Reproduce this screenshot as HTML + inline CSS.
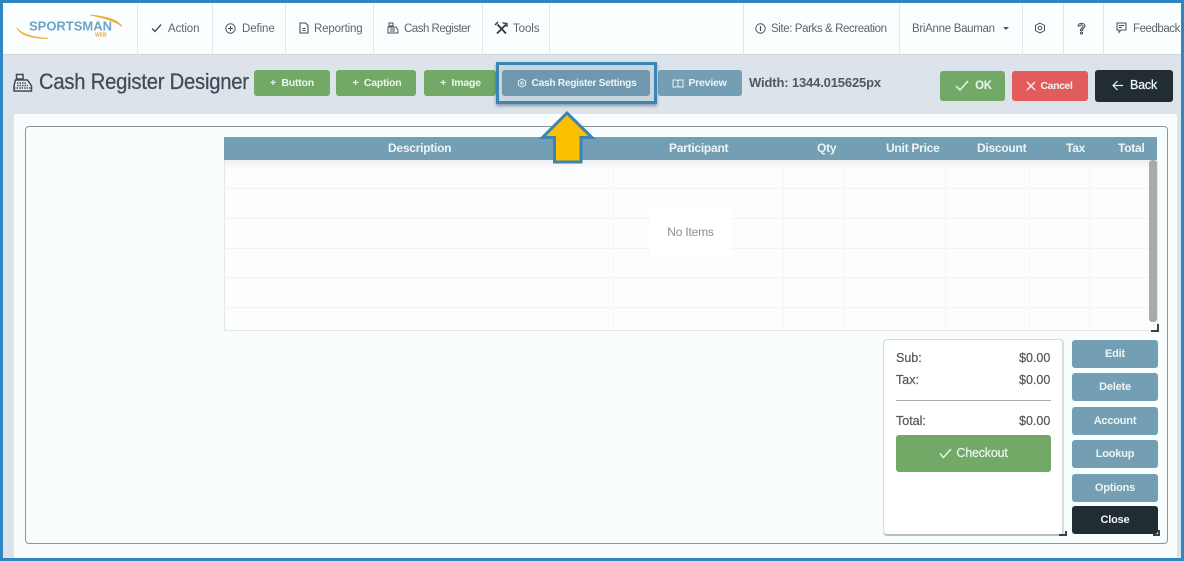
<!DOCTYPE html>
<html><head><meta charset="utf-8">
<style>
html,body{margin:0;padding:0}
body{width:1184px;height:561px;position:relative;overflow:hidden;background:#dce3ea;font-family:"Liberation Sans",sans-serif;color:#4d5a62}
div,span.a{position:absolute;box-sizing:border-box}
svg{position:absolute;overflow:visible}
.sep{top:3px;width:1px;height:52px;background:#e3e8ea}
.nav{top:22px;font-size:11.5px;line-height:15px;color:#5a666d;white-space:nowrap;letter-spacing:-.1px}
.btn{border-radius:3px;color:#eef6f4;font-weight:bold;font-size:10.5px;text-align:center;white-space:nowrap;letter-spacing:-.2px}
.g{background:#72a966}.b{background:#749eb3}.d{background:#212c33}.r{background:#e25c5c}
.th{top:137px;height:23px;line-height:22px;color:#edf5f6;font-weight:bold;font-size:12px;white-space:nowrap;letter-spacing:-.25px}
.hl{left:225px;width:924px;height:1px;background:#f2f3f3}
.vl{top:160px;height:170px;width:1px;background:#f6f6f6}
.side{left:1072px;width:86px;height:28px;line-height:28px;font-size:11px}
.lab{font-size:12.5px;line-height:16px;color:#4f575d;white-space:nowrap;-webkit-text-stroke:.2px #4f575d}
</style></head><body>
<!-- nav -->
<div style="left:3px;top:3px;width:1178px;height:52px;background:#fbfefe;border-bottom:1px solid #cfd6da"></div>
<svg style="left:15px;top:12px" width="112" height="30" viewBox="0 0 112 30"><path d="M2 16C6 22 18 25.5 33 26.5C20 26.5 6 24 2 16Z" fill="#e8b544" stroke="#e8b544" stroke-width="1"/><path d="M75 3C90 4 103 8 107 14.5C101 9.5 90 6 75 3Z" fill="#e6ae3a" stroke="#e6ae3a" stroke-width=".8"/><text x="14" y="18.5" font-family="Liberation Sans" font-size="12.5" font-weight="bold" fill="#6ba4c9" textLength="83" lengthAdjust="spacingAndGlyphs">SPORTSMAN</text><text x="80" y="24.5" font-family="Liberation Sans" font-size="5" font-weight="bold" fill="#d9ab44">WEB</text></svg>
<div class="sep" style="left:137px"></div><div class="sep" style="left:212px"></div><div class="sep" style="left:285px"></div><div class="sep" style="left:373px"></div><div class="sep" style="left:482px"></div><div class="sep" style="left:549px"></div><div class="sep" style="left:743px"></div><div class="sep" style="left:899px"></div><div class="sep" style="left:1022px"></div><div class="sep" style="left:1063px"></div><div class="sep" style="left:1103px"></div>
<svg style="left:151px;top:23px" width="11" height="10" fill="none" stroke="#444f55" stroke-width="1.4"><path d="M1 5.5L4 8.5L10 1.5"/></svg>
<div class="nav" style="left:168px">Action</div>
<svg style="left:225px;top:23px" width="11" height="11" fill="none" stroke="#444f55" stroke-width="1"><circle cx="5.5" cy="5.5" r="4.7"/><path d="M5.5 3V8M3 5.5H8"/></svg>
<div class="nav" style="left:242px">Define</div>
<svg style="left:299px;top:22px" width="10" height="12" fill="none" stroke="#444f55" stroke-width="1.1"><path d="M1 1H6.5L9 3.5V11H1Z"/><path d="M3.5 8.5H6.5M3.5 6.5H6.5"/></svg>
<div class="nav" style="left:314px;letter-spacing:-.15px">Reporting</div>
<svg style="left:387px;top:22px" width="12" height="12" fill="none" stroke="#444f55" stroke-width="1"><path d="M2 1H6V4H2ZM1 5H9L11 8V11H1Z"/><path d="M3 7H8M3 9H8"/></svg>
<div class="nav" style="left:404px;letter-spacing:-.5px">Cash Register</div>
<svg style="left:495px;top:22px" width="13" height="13" fill="none" stroke="#333c42" stroke-width="1.9"><path d="M2.5 2.5L11 11.5M11 2.5L2 11.5"/><path d="M7.5 .8L12 1.5V5" stroke-width="1.3"/><path d="M0 3L3 0" stroke-width="1.5"/></svg>
<div class="nav" style="left:513px">Tools</div>
<svg style="left:755px;top:23px" width="11" height="11" fill="none" stroke="#444f55" stroke-width="1"><circle cx="5.5" cy="5.5" r="4.7"/><path d="M5.5 3V8" stroke-width="1.3"/></svg>
<div class="nav" style="left:771px;letter-spacing:-.4px">Site: Parks &amp; Recreation</div>
<div class="nav" style="left:912px;letter-spacing:-.3px">BriAnne Bauman</div>
<svg style="left:1003px;top:27px" width="7" height="4"><path d="M0 0H6L3 3Z" fill="#4d585f"/></svg>
<svg style="left:1034px;top:22px" width="12" height="12" fill="none" stroke="#444f55" stroke-width="1"><path d="M6 1L10.5 3.5V8.5L6 11L1.5 8.5V3.5Z"/><circle cx="6" cy="6" r="1.8"/></svg>
<svg style="left:1077px;top:22px" width="9" height="13" fill="none" stroke="#444f55" stroke-width="1.1"><path d="M1 4C1 .5 8 .5 8 4C8 6 5.5 6 5.5 8.5H3.5C3.5 6 6 6 6 4C6 2.5 3 2.5 3 4Z"/><circle cx="4.5" cy="11" r="1"/></svg>
<svg style="left:1116px;top:22px" width="11" height="12" fill="none" stroke="#444f55" stroke-width="1"><path d="M1 1H10V8H5L3 10.5V8H1Z"/><path d="M3 3.5H8M3 5.5H6"/></svg>
<div class="nav" style="left:1133px;letter-spacing:-.45px">Feedback</div>
<!-- toolbar -->
<svg style="left:13px;top:73px" width="20" height="20" fill="none" stroke="#3f4a52" stroke-width="1.5"><path d="M3.5 1.5H10V6H3.5ZM2.5 7H14.5L18.5 13V18H1V13Z" fill="#e9eef1"/><path d="M4 10H13M4 12.5H15M1 15H18.5" stroke-dasharray="1.5 1"/></svg>
<div style="left:39px;top:68px;font-size:22px;line-height:28px;color:#3e4c55;white-space:nowrap;letter-spacing:-.25px;transform:scaleX(.92);transform-origin:0 0;-webkit-text-stroke:.25px #3e4c55">Cash Register Designer</div>
<div class="btn g" style="left:254px;top:70px;width:76px;height:26px;line-height:26px">+&nbsp; Button</div>
<div class="btn g" style="left:336px;top:70px;width:80px;height:26px;line-height:26px;padding-left:2px">+&nbsp; Caption</div>
<div class="btn g" style="left:424px;top:70px;width:72px;height:26px;line-height:26px;padding-left:1px">+&nbsp; Image</div>
<div class="btn b" style="left:658px;top:70px;width:84px;height:26px;line-height:26px;padding-left:15px">Preview</div>
<svg style="left:672px;top:79px" width="12" height="9" fill="none" stroke="#eaf3f5" stroke-width="1"><path d="M1 1H5L6 2L7 1H11V8H7L6 7L5 8H1ZM6 2V7"/></svg>
<div style="left:749px;top:75px;font-size:13px;line-height:16px;font-weight:bold;color:#4d5a62;white-space:nowrap;letter-spacing:-.15px">Width: 1344.015625px</div>
<!-- content -->
<div style="left:14px;top:114px;width:1163px;height:444px;background:#f9fdfe;border-radius:2px 2px 0 0"></div>
<div style="left:25px;top:126px;width:1143px;height:418px;background:#f8fefe;border:1px solid #8d9599;border-radius:4px"></div>
<!-- highlight -->
<div style="left:496px;top:62px;width:161px;height:42px;background:#c9d6dd;border:3px solid #3b85b5;box-shadow:0 2px 3px rgba(40,60,80,.45)"></div>
<div class="btn b" style="left:502px;top:70px;width:148px;height:26px;line-height:27px;padding-left:16px;background:#6f97ad;font-size:10.2px;letter-spacing:-.3px">Cash Register Settings</div>
<svg style="left:517px;top:78px" width="10" height="10" fill="none" stroke="#e6f0f3" stroke-width="1"><path d="M5 1L8.6 3V7L5 9L1.4 7V3Z"/><circle cx="5" cy="5" r="1.3"/></svg>
<!-- right btns -->
<div class="btn g" style="left:940px;top:71px;width:65px;height:30px;line-height:30px;padding-left:22px;font-size:11.5px">OK</div>
<svg style="left:955px;top:80px" width="14" height="11" fill="none" stroke="#eef6f4" stroke-width="1.4"><path d="M1 6L5 10L13 1"/></svg>
<div class="btn r" style="left:1012px;top:71px;width:76px;height:30px;line-height:30px;padding-left:13px;font-size:10.5px;letter-spacing:-.4px">Cancel</div>
<svg style="left:1026px;top:81px" width="10" height="10" fill="none" stroke="#f7ecec" stroke-width="1.5"><path d="M1 1L9 9M9 1L1 9"/></svg>
<div class="btn d" style="left:1095px;top:70px;width:78px;height:32px;line-height:30px;padding-left:19px;font-size:12.5px;font-weight:normal;-webkit-text-stroke:.25px #eef6f4">Back</div>
<svg style="left:1112px;top:80px" width="12" height="11" fill="none" stroke="#eef3f4" stroke-width="1.2"><path d="M11 5.5H1M5.5 1L1 5.5L5.5 10"/></svg>
<!-- grid -->
<div style="left:224px;top:160px;width:934px;height:171px;background:#fcfdfc;border:1px solid #e4e8e9;border-top:0"></div>
<div style="left:225px;top:160px;width:924px;height:10px;background:linear-gradient(#eeefef,#fcfdfc)"></div>
<div class="hl" style="top:188px"></div><div class="hl" style="top:218px"></div><div class="hl" style="top:248px"></div><div class="hl" style="top:277px"></div><div class="hl" style="top:307px"></div>
<div class="vl" style="left:613px"></div><div class="vl" style="left:783px"></div><div class="vl" style="left:843px"></div><div class="vl" style="left:945px"></div><div class="vl" style="left:1029px"></div><div class="vl" style="left:1089px"></div>
<div style="left:224px;top:137px;width:933px;height:23px;background:#749eb3"></div>
<div class="th" style="left:388px">Description</div>
<div class="th" style="left:669px">Participant</div>
<div class="th" style="left:817px">Qty</div>
<div class="th" style="left:886px">Unit Price</div>
<div class="th" style="left:977px">Discount</div>
<div class="th" style="left:1066px">Tax</div>
<div class="th" style="left:1118px">Total</div>
<div style="left:1149px;top:160px;width:8px;height:162px;background:#a9abab;border-radius:3px"></div>
<div style="left:650px;top:208px;width:81px;height:50px;background:#fff;text-align:center;font-size:12px;line-height:48px;color:#8a8f92;letter-spacing:-.2px">No Items</div>
<div style="left:1151px;top:324px;width:8px;height:8px;border-right:2px solid #3a4247;border-bottom:2px solid #3a4247"></div>
<!-- totals -->
<div style="left:883px;top:339px;width:181px;height:197px;background:#fff;border:1px solid #d8dcdd;border-bottom:2px solid #b9c0c3;border-right:2px solid #d8dcdd;border-radius:4px"></div>
<div class="lab" style="left:896px;top:350px">Sub:</div><div class="lab" style="left:1019px;top:350px">$0.00</div>
<div class="lab" style="left:896px;top:372px">Tax:</div><div class="lab" style="left:1019px;top:372px">$0.00</div>
<div style="left:896px;top:400px;width:155px;height:1px;background:#a8aaab"></div>
<div class="lab" style="left:896px;top:413px">Total:</div><div class="lab" style="left:1019px;top:413px">$0.00</div>
<div class="btn g" style="left:896px;top:435px;width:155px;height:37px;line-height:36px;font-size:12.5px;padding-left:17px;font-weight:normal;-webkit-text-stroke:.2px #eef6f4">Checkout</div>
<svg style="left:939px;top:448px" width="13" height="11" fill="none" stroke="#eef6f4" stroke-width="1.4"><path d="M1 5.5L4.5 9.5L12 1"/></svg>
<div style="left:1059px;top:531px;width:8px;height:5px;border-right:2px solid #3a4247;border-bottom:2px solid #3a4247"></div>
<div class="btn b side" style="top:340px">Edit</div>
<div class="btn b side" style="top:373px">Delete</div>
<div class="btn b side" style="top:407px">Account</div>
<div class="btn b side" style="top:440px">Lookup</div>
<div class="btn b side" style="top:474px">Options</div>
<div class="btn d side" style="top:506px">Close</div>
<div style="left:1153px;top:530px;width:7px;height:6px;border-right:2px solid #3a4247;border-bottom:2px solid #3a4247"></div>
<!-- arrow -->
<svg style="left:540px;top:110px" width="56" height="56"><path d="M27 3L52 27.5H41V52H14.5V27.5H2.5Z" fill="#fdc000" stroke="#3b85b5" stroke-width="3" stroke-linejoin="miter"/></svg>
<!-- frame -->
<div style="left:0;top:0;width:1184px;height:3px;background:#2f86c0"></div>
<div style="left:0;top:0;width:3px;height:561px;background:#2f86c0"></div>
<div style="left:1181px;top:0;width:3px;height:561px;background:#2f86c0"></div>
<div style="left:0;top:558px;width:1184px;height:3px;background:#2f86c0"></div>
</body></html>
